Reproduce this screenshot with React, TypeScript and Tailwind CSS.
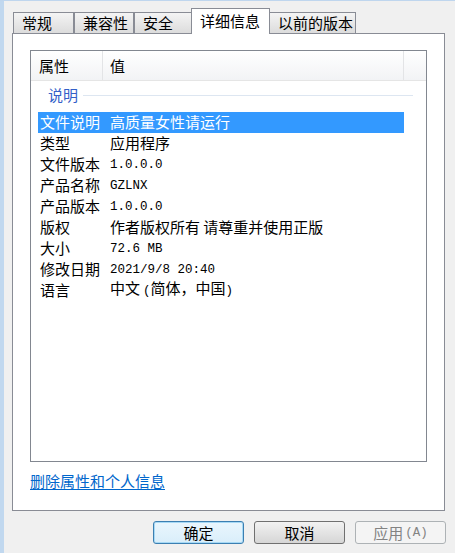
import type { ReactNode } from 'react';

const cjk = "font-['Noto_Sans_CJK_SC',sans-serif]";
const mono = "font-['Liberation_Mono','Noto_Sans_CJK_SC',monospace] text-[12.5px]";

interface Row {
  label: string;
  value: ReactNode;
  selected?: boolean;
}

const rows: Row[] = [
  { label: '文件说明', value: '高质量女性请运行', selected: true },
  { label: '类型', value: '应用程序' },
  { label: '文件版本', value: <span className={mono}>1.0.0.0</span> },
  { label: '产品名称', value: <span className={mono}>GZLNX</span> },
  { label: '产品版本', value: <span className={mono}>1.0.0.0</span> },
  { label: '版权', value: '作者版权所有 请尊重并使用正版' },
  { label: '大小', value: <span className={mono}>72.6 MB</span> },
  { label: '修改日期', value: <span className={mono}>2021/9/8 20:40</span> },
  {
    label: '语言',
    value: (
      <>
        中文<span className={`${mono} ml-[3px]`}>(</span>简体，中国<span className={mono}>)</span>
      </>
    ),
  },
];

const tabs = [
  { label: '常规', width: 'w-[61px]' },
  { label: '兼容性', width: 'w-[60px]' },
  { label: '安全', width: 'w-[58px]' },
  { label: '详细信息', width: 'w-[79px]', active: true },
  { label: '以前的版本', width: 'w-[87px]' },
];

function Tab({ label, width, active }: { label: string; width: string; active?: boolean }) {
  if (active) {
    return (
      <div
        className={`${width} relative z-10 -mb-px -mx-px flex h-[26px] items-start border border-b-0 border-[#898c95] bg-white pl-[8px] pt-[2px] text-[15px] leading-[20px] text-black`}
      >
        {label}
      </div>
    );
  }
  return (
    <div
      className={`${width} flex h-[21px] items-center border border-b-0 border-[#898c95] bg-linear-to-b from-[#f4f4f4] to-[#dcdcdc] pl-[8px] text-[15px] leading-[20px] text-black`}
    >
      {label}
    </div>
  );
}

function Button({ children, variant }: { children: ReactNode; variant?: 'default' | 'disabled' }) {
  const base = 'flex h-[23px] w-[91px] items-center justify-center rounded-[3px] border text-[15px] leading-[20px]';
  if (variant === 'default') {
    return (
      <div className={`${base} border-[#3c7fb1] bg-linear-to-b from-[#eaf6fd] to-[#d9eefa] text-black shadow-[inset_0_0_0_1px_#a7d9f5]`}>
        {children}
      </div>
    );
  }
  if (variant === 'disabled') {
    return <div className={`${base} border-[#adb2b5] bg-[#f4f4f4] text-[#838383]`}>{children}</div>;
  }
  return (
    <div className={`${base} border-[#707070] bg-linear-to-b from-[#f2f2f2] to-[#d6d6d6] text-black`}>{children}</div>
  );
}

export default function App() {
  return (
    <div className={`${cjk} flex h-[553px] w-[455px] overflow-hidden border-t border-[#bfd6ee] bg-[#f0f0f0]`}>
      <div className="w-[4px] shrink-0 bg-[#c1d8ef]" />
      <div className="flex flex-1 flex-col">
        <div className="ml-[9px] mt-[7px] flex items-end">
          {tabs.map((tab) => (
            <Tab key={tab.label} label={tab.label} width={tab.width} active={tab.active} />
          ))}
        </div>

        <div className="ml-[8px] flex h-[478px] w-[433px] flex-col border border-[#898c95] bg-white pl-[17px] pt-[16px]">
          <div className="flex h-[412px] w-[397px] flex-col border border-[#828790] bg-white">
            <div className="flex h-[30px] border-b border-[#e5e5e5] bg-linear-to-b from-white to-[#f2f3f5] text-[15px] leading-[20px] text-black">
              <div className="flex w-[72px] items-center border-r border-[#e3e4e6] pl-[8px]">属性</div>
              <div className="flex w-[301px] items-center border-r border-[#e3e4e6] pl-[7px]">值</div>
              <div className="flex-1" />
            </div>

            <div className="flex h-[31px] items-center pb-[3px] pl-[17px] pr-[13px]">
              <span className="text-[15px] leading-[20px] text-[#3360c8]">说明</span>
              <div className="ml-[5px] h-px flex-1 bg-[#dde6f1]" />
            </div>

            <div className="ml-[7px] flex w-[366px] flex-col">
              {rows.map((row) => (
                <div
                  key={row.label}
                  className={`flex h-[21px] items-center pb-[2px] text-[15px] leading-[19px] ${
                    row.selected ? 'bg-[#3399ff] text-white' : 'text-black'
                  }`}
                >
                  <div className="w-[72px] shrink-0 pl-[2px]">{row.label}</div>
                  <div className="whitespace-nowrap">{row.value}</div>
                </div>
              ))}
            </div>
          </div>

          <a className="mt-[9px] w-fit text-[15px] leading-[20px] text-[#0066cc] underline underline-offset-2">
            删除属性和个人信息
          </a>
        </div>

        <div className="ml-[149px] mt-[10px] flex gap-[10px]">
          <Button variant="default">确定</Button>
          <Button>取消</Button>
          <Button variant="disabled">
            应用<span className={`${mono} ml-[2px]`}>(A)</span>
          </Button>
        </div>
      </div>
    </div>
  );
}
